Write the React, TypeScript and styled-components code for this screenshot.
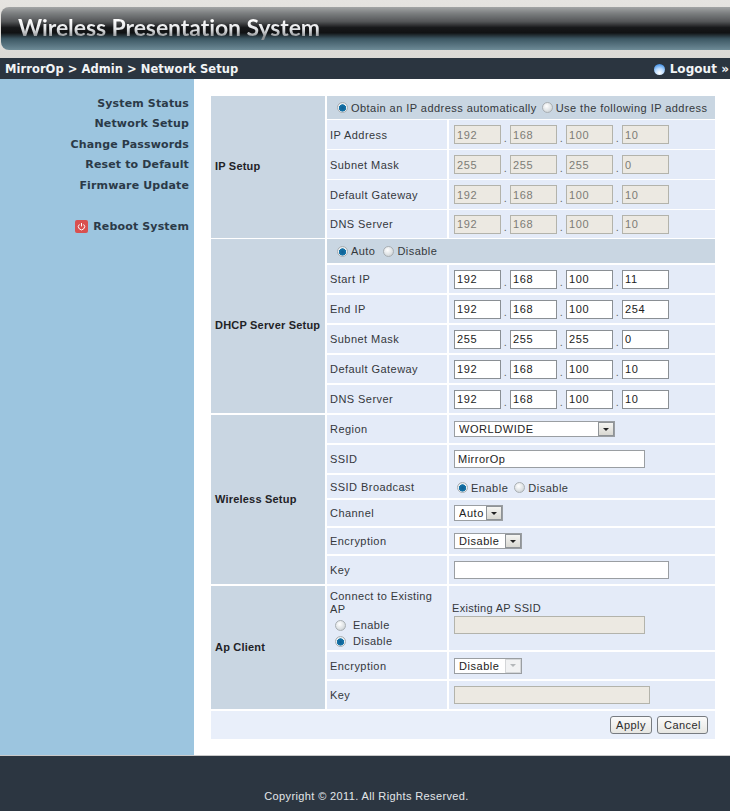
import React from "react";
import styled, { createGlobalStyle } from "styled-components";

const GlobalStyle = createGlobalStyle`
  html, body { margin: 0; padding: 0; background: #fff; }
  body { font-family: "Liberation Sans", Arial, sans-serif; font-size: 11px; color: #2f3338; }
  * { box-sizing: border-box; }
`;

const Page = styled.div`
  width: 730px;
  height: 811px;
  display: flex;
  flex-direction: column;
  overflow: hidden;
`;

const Header = styled.header`
  height: 58px;
  padding: 7px 0 8px 1px;
  background: linear-gradient(#e6e4e1, #dcdad6);
`;

const Banner = styled.div`
  height: 43px;
  padding: 2px 0 0 17px;
  border-radius: 8px 0 0 8px;
  background:
    radial-gradient(circle at 1px 1px, rgba(0, 0, 0, 0.2) 0.7px, transparent 0.8px) 0 0 / 2px 2px,
    linear-gradient(#c8cacb 0, #9a9d9f 14%, #66696b 34%, #1c1e20 48%, #141618 60%, #4a6b7a 74%, #86aab8 100%);
`;

const Title = styled.h1`
  margin: 0;
  display: inline-block;
  font-family: Lato, "Open Sans", sans-serif;
  font-size: 23px;
  line-height: 36px;
  font-weight: 700;
  letter-spacing: -0.08px;
  color: transparent;
  background: linear-gradient(#ffffff 30%, #e4e6e8 55%, #8e9194 78%);
  -webkit-background-clip: text;
  background-clip: text;
`;

const NavBar = styled.nav`
  height: 21px;
  background: #2b3540;
  display: flex;
  align-items: center;
  justify-content: space-between;
  padding: 0 1px 0 5px;
  color: #f2f4f6;
  font-family: "DejaVu Sans", sans-serif;
  font-weight: 700;
  font-size: 11.5px;
  letter-spacing: 0.05px;
`;

const Logout = styled.span`
  display: flex;
  align-items: center;
  gap: 5px;
  font-size: 12px;
`;

const Orb = styled.span`
  width: 11px;
  height: 11px;
  margin-top: 2px;
  border-radius: 50%;
  background: radial-gradient(circle at 50% 80%, #ffffff 0, #bcdcff 40%, #3f8fe6 85%);
`;

const Body = styled.div`
  flex: 1;
  display: flex;
  min-height: 0;
`;

const Sidebar = styled.aside`
  width: 194px;
  padding: 14px 5px 0 0;
  background: #9cc5df;
  display: flex;
  flex-direction: column;
  align-items: flex-end;
`;

const SideLink = styled.a<{ $gapBefore?: boolean }>`
  display: flex;
  align-items: center;
  gap: 5px;
  height: 20.5px;
  margin-top: ${(p) => (p.$gapBefore ? "20.5px" : "0")};
  font-family: "DejaVu Sans", sans-serif;
  font-weight: 700;
  font-size: 11px;
  letter-spacing: 0.15px;
  color: #2b3a48;
`;

const Main = styled.main`
  flex: 1;
  padding: 17px 15px 0 17px;
  display: flex;
  flex-direction: column;
`;

const Section = styled.section<{ $rows: string; $rowGap: number; $after: number }>`
  display: grid;
  grid-template-columns: 114px 120px 1fr;
  grid-template-rows: ${(p) => p.$rows};
  column-gap: 2px;
  row-gap: ${(p) => p.$rowGap}px;
  margin-bottom: ${(p) => p.$after}px;
`;

const GroupCell = styled.div`
  grid-row: 1 / -1;
  background: #c9d6e2;
  display: flex;
  align-items: center;
  padding: 0 0 2px 4px;
  font-weight: 700;
  font-size: 11px;
  letter-spacing: 0.2px;
  color: #1f2327;
`;

const ChoiceRow = styled.div`
  grid-column: 2 / 4;
  background: #c9d6e2;
  display: flex;
  align-items: center;
  padding-left: 10px;
  letter-spacing: 0.45px;
  color: #34383c;
`;

const LabelCell = styled.div`
  background: #e4ebf8;
  display: flex;
  align-items: center;
  padding-left: 3px;
  letter-spacing: 0.45px;
  color: #34383c;
`;

const ValueCell = styled.div`
  background: #e4ebf8;
  display: flex;
  align-items: center;
  padding-left: 5px;
  letter-spacing: 0.5px;
  color: #34383c;
`;

const BroadcastChoices = styled.div`
  display: flex;
  align-items: center;
  padding: 2px 0 0 3px;
`;

const ConnectLabel = styled.div`
  grid-column: 2;
  background: #e4ebf8;
  padding: 4px 3px 0;
  line-height: 13px;
  letter-spacing: 0.4px;
  color: #34383c;
`;

const RadioStack = styled.div`
  display: flex;
  flex-direction: column;
  padding: 1px 0 0 5px;
`;

const StackItem = styled.label`
  display: flex;
  align-items: center;
  height: 16px;
  gap: 7px;
`;

const SsidCell = styled.div`
  background: #e4ebf8;
  display: flex;
  flex-direction: column;
  justify-content: center;
  align-items: flex-start;
  padding: 0 0 1px 3px;
  letter-spacing: 0.3px;
  color: #34383c;
`;

const Choice = styled.label<{ $gap?: number }>`
  display: flex;
  align-items: center;
  gap: 3px;
  margin-right: ${(p) => p.$gap ?? 8}px;
  white-space: nowrap;
`;

const Radio = styled.input.attrs({ type: "radio" })`
  appearance: none;
  width: 11px;
  height: 11px;
  margin: 0;
  flex: none;
  border-radius: 50%;
  border: 1px solid #a9afb3;
  background: radial-gradient(circle at 40% 35%, #ffffff 0, #dfe3e5 55%, #bfc5c8 100%);
  &:checked {
    background: radial-gradient(circle at 50% 55%, #0d5f93 0, #1673a8 50%, #eef2f4 58%, #d5dadd 100%);
  }
`;

const OctetRow = styled.div`
  display: flex;
  align-items: center;
`;

const Octet = styled.input<{ $locked?: boolean }>`
  width: 47px;
  height: 19px;
  padding: 0 0 0 2px;
  margin: 0;
  border: 1px solid ${(p) => (p.$locked ? "#b3b3ab" : "#8a8f94")};
  border-radius: 0;
  background: ${(p) => (p.$locked ? "#ece9e2" : "#ffffff")};
  color: ${(p) => (p.$locked ? "#7c7c76" : "#222")};
  font: 11px "Liberation Sans", Arial, sans-serif;
  letter-spacing: 0.6px;
  opacity: 1;
`;

const Dot = styled.span`
  width: 9px;
  padding-top: 6px;
  text-align: center;
  color: #666;
`;

const TextInput = styled.input<{ $width: number; $locked?: boolean; $indent?: boolean }>`
  width: ${(p) => p.$width}px;
  height: 18px;
  margin: ${(p) => (p.$indent ? "2px 0 0 2px" : "0")};
  padding: 0 0 0 3px;
  border: 1px solid ${(p) => (p.$locked ? "#b3b3ab" : "#9a9ea2")};
  border-radius: 0;
  background: ${(p) => (p.$locked ? "#ece9e2" : "#ffffff")};
  color: #222;
  font: 11px "Liberation Sans", Arial, sans-serif;
  letter-spacing: 0.5px;
  opacity: 1;
`;

const SelectWrap = styled.div<{ $width: number }>`
  position: relative;
  width: ${(p) => p.$width}px;
  height: 16px;
`;

const NativeSelect = styled.select`
  appearance: none;
  display: block;
  width: 100%;
  height: 100%;
  padding: 0 0 0 4px;
  margin: 0;
  border: 1px solid #9a9ea2;
  border-radius: 0;
  background: #fff;
  color: #222;
  opacity: 1;
  font: 11px "Liberation Sans", Arial, sans-serif;
  letter-spacing: 0.55px;
`;

const Arrow = styled.span<{ $off?: boolean }>`
  position: absolute;
  top: 1px;
  right: 1px;
  bottom: 1px;
  width: 16px;
  display: flex;
  align-items: center;
  justify-content: center;
  border: 1px solid ${(p) => (p.$off ? "#d4d6d8" : "#8f9397")};
  background: ${(p) => (p.$off ? "#f1f2f3" : "linear-gradient(#f5f5f2, #d9d8d2)")};
  pointer-events: none;
  &::after {
    content: "";
    border-style: solid;
    border-width: 3px 3.5px 0;
    border-color: ${(p) => (p.$off ? "#b4b7ba" : "#222")} transparent transparent;
  }
`;

const ActionRow = styled.div`
  height: 28px;
  background: #e9effa;
  display: flex;
  align-items: center;
  justify-content: flex-end;
  gap: 5px;
  padding-right: 7px;
`;

const ActionButton = styled.button<{ $width: number }>`
  width: ${(p) => p.$width}px;
  height: 18px;
  padding: 0;
  border: 1px solid #777b80;
  border-radius: 3px;
  background: linear-gradient(#fbfbfb, #e6e6e2);
  color: #2b2b2b;
  font: 11px "Liberation Sans", Arial, sans-serif;
  letter-spacing: 0.45px;
`;

const Footer = styled.footer`
  height: 56px;
  padding: 33px 0 0 3px;
  background: #2c3641;
  border-top: 1px solid #c9c9c9;
  text-align: center;
  color: #e3e6e9;
  font-size: 11px;
  line-height: 14px;
  letter-spacing: 0.38px;
`;

const PowerIcon = () => (
  <svg width="13" height="13" viewBox="0 0 13 13" aria-hidden="true">
    <rect x="0" y="0" width="13" height="13" rx="2" fill="#d9504f" />
    <path d="M6.5 3v3.4" stroke="#fff" strokeWidth="1" fill="none" />
    <path d="M4.4 4.4a3.1 3.1 0 1 0 4.2 0" stroke="#fff" strokeWidth="1" fill="none" />
  </svg>
);

const Octets = ({ values, locked }: { values: string[]; locked?: boolean }) => (
  <OctetRow>
    {values.map((v, i) => (
      <React.Fragment key={i}>
        {i > 0 && <Dot>.</Dot>}
        <Octet readOnly defaultValue={v} disabled={locked} $locked={locked} />
      </React.Fragment>
    ))}
  </OctetRow>
);

const Select = ({ width, value, off }: { width: number; value: string; off?: boolean }) => (
  <SelectWrap $width={width}>
    <NativeSelect defaultValue={value} disabled={off}>
      <option>{value}</option>
    </NativeSelect>
    <Arrow $off={off} />
  </SelectWrap>
);

const ipSetup: [string, string[]][] = [
  ["IP Address", ["192", "168", "100", "10"]],
  ["Subnet Mask", ["255", "255", "255", "0"]],
  ["Default Gateway", ["192", "168", "100", "10"]],
  ["DNS Server", ["192", "168", "100", "10"]],
];

const dhcpSetup: [string, string[]][] = [
  ["Start IP", ["192", "168", "100", "11"]],
  ["End IP", ["192", "168", "100", "254"]],
  ["Subnet Mask", ["255", "255", "255", "0"]],
  ["Default Gateway", ["192", "168", "100", "10"]],
  ["DNS Server", ["192", "168", "100", "10"]],
];

const links = ["System Status", "Network Setup", "Change Passwords", "Reset to Default", "Firmware Update"];

export default function App() {
  return (
    <Page>
      <GlobalStyle />
      <Header>
        <Banner>
          <Title>Wireless Presentation System</Title>
        </Banner>
      </Header>
      <NavBar>
        <span>MirrorOp &gt; Admin &gt; Network Setup</span>
        <Logout>
          <Orb />
          Logout »
        </Logout>
      </NavBar>
      <Body>
        <Sidebar>
          {links.map((l) => (
            <SideLink key={l}>{l}</SideLink>
          ))}
          <SideLink $gapBefore>
            <PowerIcon />
            Reboot System
          </SideLink>
        </Sidebar>
        <Main>
          <Section $rows="23px 29px 29px 29px 28px" $rowGap={1} $after={1}>
            <GroupCell>IP Setup</GroupCell>
            <ChoiceRow>
              <Choice $gap={5}><Radio name="ip" defaultChecked />Obtain an IP address automatically</Choice>
              <Choice><Radio name="ip" />Use the following IP address</Choice>
            </ChoiceRow>
            {ipSetup.map(([label, values]) => (
              <React.Fragment key={label}>
                <LabelCell>{label}</LabelCell>
                <ValueCell><Octets values={values} locked /></ValueCell>
              </React.Fragment>
            ))}
          </Section>

          <Section $rows="24px 28px 28px 28px 28px 28px" $rowGap={2} $after={2}>
            <GroupCell>DHCP Server Setup</GroupCell>
            <ChoiceRow>
              <Choice $gap={8}><Radio name="dhcp" defaultChecked />Auto</Choice>
              <Choice><Radio name="dhcp" />Disable</Choice>
            </ChoiceRow>
            {dhcpSetup.map(([label, values]) => (
              <React.Fragment key={label}>
                <LabelCell>{label}</LabelCell>
                <ValueCell><Octets values={values} /></ValueCell>
              </React.Fragment>
            ))}
          </Section>

          <Section $rows="28px 28px 23px 26px 26px 28px" $rowGap={2} $after={2}>
            <GroupCell>Wireless Setup</GroupCell>
            <LabelCell>Region</LabelCell>
            <ValueCell><Select width={161} value="WORLDWIDE" /></ValueCell>
            <LabelCell>SSID</LabelCell>
            <ValueCell><TextInput $width={191} readOnly defaultValue="MirrorOp" /></ValueCell>
            <LabelCell>SSID Broadcast</LabelCell>
            <ValueCell>
              <BroadcastChoices>
                <Choice $gap={6}><Radio name="bc" defaultChecked />Enable</Choice>
                <Choice><Radio name="bc" />Disable</Choice>
              </BroadcastChoices>
            </ValueCell>
            <LabelCell>Channel</LabelCell>
            <ValueCell><Select width={49} value="Auto" /></ValueCell>
            <LabelCell>Encryption</LabelCell>
            <ValueCell><Select width={68} value="Disable" /></ValueCell>
            <LabelCell>Key</LabelCell>
            <ValueCell><TextInput $width={215} readOnly /></ValueCell>
          </Section>

          <Section $rows="64px 27px 28px" $rowGap={2} $after={2}>
            <GroupCell>Ap Client</GroupCell>
            <ConnectLabel>
              Connect to Existing AP
              <RadioStack>
                <StackItem><Radio name="ap" />Enable</StackItem>
                <StackItem><Radio name="ap" defaultChecked />Disable</StackItem>
              </RadioStack>
            </ConnectLabel>
            <SsidCell>
              Existing AP SSID
              <TextInput $width={191} $locked $indent disabled />
            </SsidCell>
            <LabelCell>Encryption</LabelCell>
            <ValueCell><Select width={68} value="Disable" off /></ValueCell>
            <LabelCell>Key</LabelCell>
            <ValueCell><TextInput $width={196} $locked disabled /></ValueCell>
          </Section>

          <ActionRow>
            <ActionButton $width={42}>Apply</ActionButton>
            <ActionButton $width={51}>Cancel</ActionButton>
          </ActionRow>
        </Main>
      </Body>
      <Footer>Copyright © 2011. All Rights Reserved.</Footer>
    </Page>
  );
}
